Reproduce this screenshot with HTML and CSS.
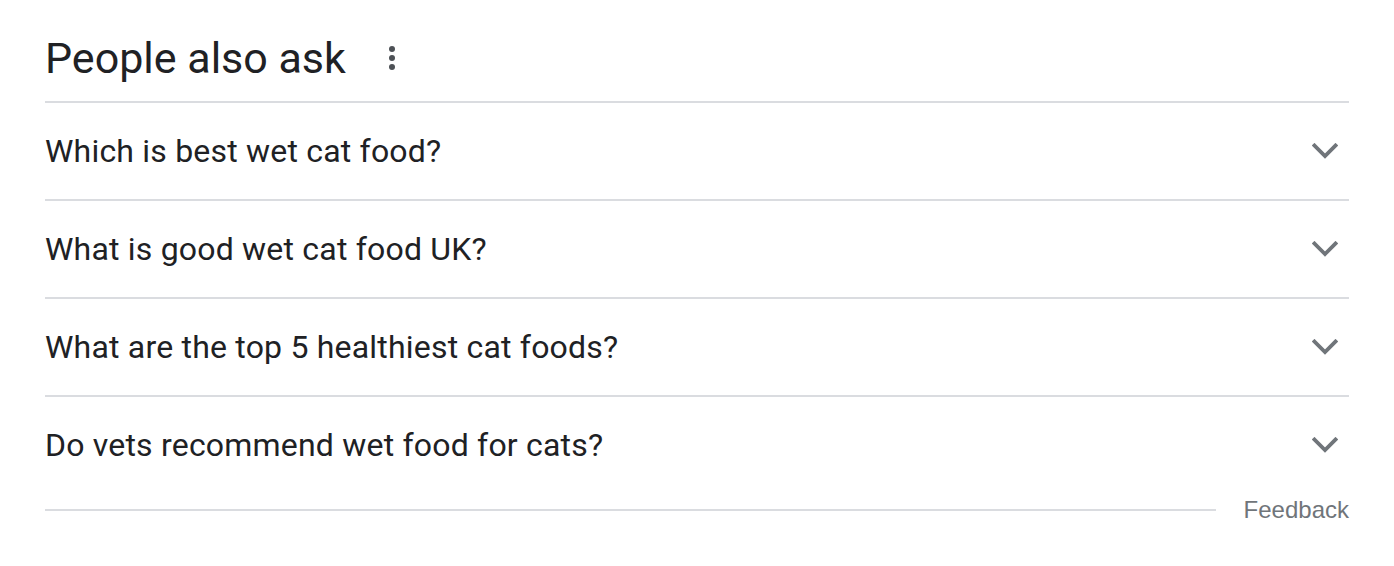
FILE: index.html
```html
<!DOCTYPE html>
<html lang="en">
<head>
<meta charset="utf-8">
<title>People also ask</title>
<link rel="stylesheet" href="styles.css">
</head>
<body>
<div class="paa">
  <div class="paa-head">
    <h2 class="paa-title">People also ask</h2>
    <span class="paa-more">
      <svg width="10" height="26" viewBox="0 0 10 26"><circle cx="5" cy="4" r="3"/><circle cx="5" cy="13" r="3"/><circle cx="5" cy="22" r="3"/></svg>
    </span>
  </div>
  <div class="paa-list">
    <div class="paa-row"><span class="paa-q">Which is best wet cat food?</span><svg class="chev" width="26" height="16" viewBox="0 0 26 16"><path d="M2.5 2.5 L13 13 L23.5 2.5"/></svg></div>
    <div class="paa-row"><span class="paa-q">What is good wet cat food UK?</span><svg class="chev" width="26" height="16" viewBox="0 0 26 16"><path d="M2.5 2.5 L13 13 L23.5 2.5"/></svg></div>
    <div class="paa-row"><span class="paa-q">What are the top 5 healthiest cat foods?</span><svg class="chev" width="26" height="16" viewBox="0 0 26 16"><path d="M2.5 2.5 L13 13 L23.5 2.5"/></svg></div>
    <div class="paa-row last"><span class="paa-q">Do vets recommend wet food for cats?</span><svg class="chev" width="26" height="16" viewBox="0 0 26 16"><path d="M2.5 2.5 L13 13 L23.5 2.5"/></svg></div>
  </div>
  <div class="paa-foot">
    <div class="foot-line"></div>
    <span class="feedback">Feedback</span>
  </div>
</div>
</body>
</html>
```
FILE: styles.css
```css
html, body {
  margin: 0;
  padding: 0;
  background: #fff;
}
.paa {
  width: 1304px;
  margin-left: 45px;
  font-family: Roboto, "Liberation Sans", Arial, sans-serif;
  color: #202124;
}
.paa-head {
  display: flex;
  align-items: center;
  height: 101px;
  border-bottom: 2px solid #dadce0;
  box-sizing: content-box;
}
.paa-title {
  margin: 0;
  font-size: 43px;
  font-weight: 400;
  line-height: 52px;
  padding-top: 14px;
  padding-left: 0;
}
.paa-more {
  display: flex;
  margin-left: 41px;
  padding-top: 14px;
}
.paa-more svg {
  fill: #4d5156;
}
.paa-row {
  display: flex;
  align-items: center;
  justify-content: space-between;
  height: 96px;
  border-bottom: 2px solid #dadce0;
}
.paa-row.last {
  border-bottom: none;
}
.paa-q {
  font-size: 32px;
  line-height: 40px;
  letter-spacing: 0.2px;
  padding-left: 0;
}
.chev {
  margin-right: 11px;
  fill: none;
  stroke: #70757a;
  stroke-width: 3.8;
  stroke-linecap: square;
}
.paa-foot {
  display: flex;
  align-items: center;
  height: 34px;
}
.foot-line {
  flex: 1;
  height: 2px;
  background: #dadce0;
  margin-right: 28px;
}
.feedback {
  font-family: "Liberation Sans", Arial, sans-serif;
  font-size: 24px;
  line-height: 34px;
  color: #70757a;
}
```
